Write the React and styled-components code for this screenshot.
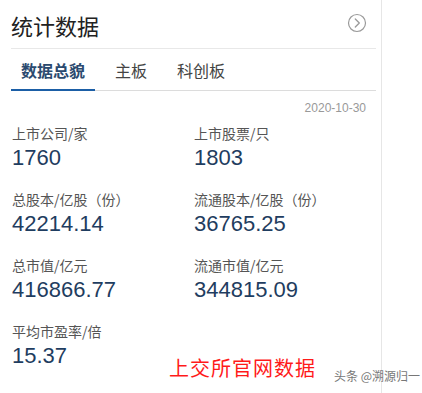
import React, { useState } from 'react';
import styled, { createGlobalStyle } from 'styled-components';

const GlobalStyle = createGlobalStyle`
  html, body {
    margin: 0;
    padding: 0;
    background: #fff;
  }
  body {
    font-family: "Liberation Sans", Arial, "Noto Sans CJK SC", sans-serif;
  }
`;

const Page = styled.div`
  position: relative;
  width: 422px;
  height: 393px;
  overflow: hidden;
`;

const Panel = styled.div`
  width: 365px;
  height: 100%;
  padding: 0 5px 0 11px;
  border-right: 1px solid #e6e6e6;
`;

const Header = styled.div`
  display: flex;
  align-items: center;
  justify-content: space-between;
  height: 48px;
  border-bottom: 1px solid #e8e8e8;
`;

const Title = styled.h2`
  margin: 0;
  font-family: "Noto Sans CJK SC", sans-serif;
  font-size: 22px;
  font-weight: 400;
  color: #222;
  line-height: 30px;
  margin-top: 1px;
`;

const MoreButton = styled.span`
  display: flex;
  width: 20px;
  height: 20px;
  margin-right: 9px;
  margin-top: -3px;
`;

const Tabs = styled.div`
  display: flex;
  gap: 10px;
  height: 41px;
  border-bottom: 1px solid #dcdcdc;
`;

const Tab = styled.div`
  padding: 2px 10px 0;
  display: flex;
  align-items: center;
  font-family: "Noto Sans CJK SC", sans-serif;
  font-size: 16px;
  font-weight: ${(p) => (p.active ? 700 : 400)};
  color: ${(p) => (p.active ? '#2b4a6f' : '#444')};
  border-bottom: 2px solid ${(p) => (p.active ? '#1b5ea6' : 'transparent')};
  margin-bottom: -1px;
  cursor: pointer;
`;

const DateLine = styled.div`
  text-align: right;
  padding-right: 10px;
  font-size: 12px;
  color: #999;
  line-height: 16px;
  margin-top: 9px;
`;

const StatsGrid = styled.div`
  display: grid;
  grid-template-columns: 182px 1fr;
  row-gap: 18px;
  padding-left: 1px;
  margin-top: 7px;
`;

const Stat = styled.div`
  display: flex;
  flex-direction: column;
`;

const Label = styled.div`
  font-family: "Noto Sans CJK SC", sans-serif;
  font-size: 14px;
  line-height: 20px;
  color: #555;
`;

const Value = styled.div`
  font-size: 22px;
  line-height: 26px;
  color: #1f3d60;
  margin-top: 2px;
`;

const SourceNote = styled.div`
  position: absolute;
  left: 169px;
  top: 353px;
  font-family: "Noto Sans CJK SC", sans-serif;
  font-size: 20px;
  color: #ff1a1a;
  letter-spacing: 1px;
`;

const Watermark = styled.div`
  position: absolute;
  left: 334px;
  top: 367px;
  font-family: "Noto Sans CJK SC", sans-serif;
  font-size: 12px;
  color: #777;
  text-shadow: 0 0 1px #fff;
`;

const stats = [
  { label: '上市公司/家', value: '1760' },
  { label: '上市股票/只', value: '1803' },
  { label: '总股本/亿股（份）', value: '42214.14' },
  { label: '流通股本/亿股（份）', value: '36765.25' },
  { label: '总市值/亿元', value: '416866.77' },
  { label: '流通市值/亿元', value: '344815.09' },
  { label: '平均市盈率/倍', value: '15.37' },
];

const tabs = ['数据总貌', '主板', '科创板'];

function App() {
  const [activeTab, setActiveTab] = useState(0);

  return (
    <Page>
      <GlobalStyle />
      <Panel>
        <Header>
          <Title>统计数据</Title>
          <MoreButton>
            <svg width="20" height="20" viewBox="0 0 20 20" fill="none">
              <circle cx="10" cy="10" r="8.5" stroke="#9a9a9a" strokeWidth="1.2" />
              <path d="M8.3 6 L12.3 10 L8.3 14" stroke="#9a9a9a" strokeWidth="1.3" strokeLinecap="round" strokeLinejoin="round" />
            </svg>
          </MoreButton>
        </Header>
        <Tabs>
          {tabs.map((t, i) => (
            <Tab key={t} active={i === activeTab} onClick={() => setActiveTab(i)}>
              {t}
            </Tab>
          ))}
        </Tabs>
        <DateLine>2020-10-30</DateLine>
        <StatsGrid>
          {stats.map((s) => (
            <Stat key={s.label}>
              <Label>{s.label}</Label>
              <Value>{s.value}</Value>
            </Stat>
          ))}
        </StatsGrid>
      </Panel>
      <SourceNote>上交所官网数据</SourceNote>
      <Watermark>头条 @溯源归一</Watermark>
    </Page>
  );
}

export default App;
